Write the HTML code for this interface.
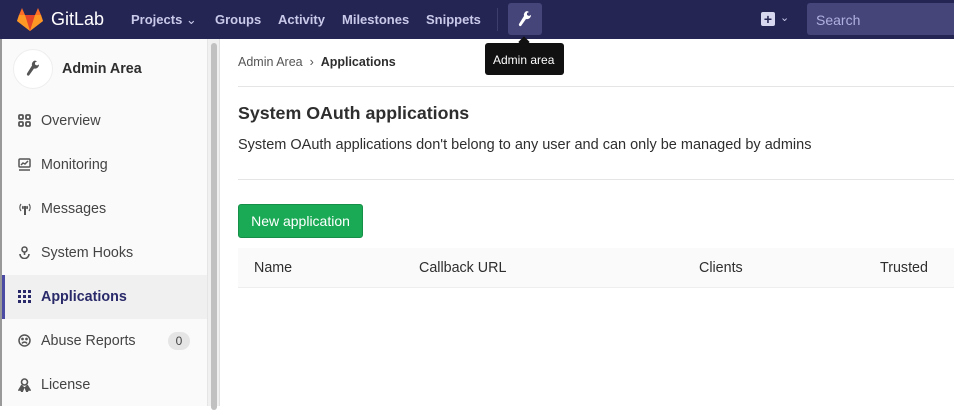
<!DOCTYPE html><html><head><style>
*{box-sizing:border-box;margin:0;padding:0}
body{width:954px;height:406px;overflow:hidden;font-family:"Liberation Sans",sans-serif;background:#fff;position:relative;color:#2e2e2e}
.hdr{position:absolute;left:0;top:0;width:954px;height:39px;background:#252554;color:#fff}
.hdr .n{position:absolute;top:12px;font-size:13px;font-weight:bold;color:#c9c9ea}
.side{position:absolute;left:0;top:39px;width:208px;height:367px;background:#fafafa;border-left:2px solid #999;border-right:1px solid #e5e5e5}
.sb{position:absolute;left:208px;top:39px;width:12px;height:367px;background:#f0f0f0;border-right:1px solid #e0e0e0}
.sb div{position:absolute;left:3px;top:4px;width:6px;height:367px;background:#c1c1c1;border-radius:3px}
.it{position:absolute;left:2px;width:205px;height:44px;font-size:14.3px;color:#444}
.it span{position:absolute;left:39px;top:14px}
.it svg{position:absolute;left:16px;top:15px}
.act{background:#f0f0f0;border-left:3px solid #4b4ba3}
.act span{font-weight:bold;color:#2a2a6a;left:36px}
.act svg{left:13px}
</style></head><body>
<div class="hdr">
<svg style="position:absolute;left:17px;top:8px" width="26" height="23" viewBox="0 0 26 23"><path d="M13 23L0 13l2-6 3-7 3 7h10l3-7 3 7 2 6z" fill="#fc6d26"/><path d="M13 23L8 7h10z" fill="#e24329"/><path d="M13 23L0 13 2 7h6z M13 23l13-10-2-6h-6z" fill="#fca326" opacity=".8"/></svg>
<div style="position:absolute;left:51px;top:9px;font-size:18px;color:#fff">GitLab</div>
<div class="n" style="left:131px">Projects <span style="font-weight:normal">⌄</span></div>
<div class="n" style="left:215px">Groups</div>
<div class="n" style="left:278px">Activity</div>
<div class="n" style="left:342px">Milestones</div>
<div class="n" style="left:426px">Snippets</div>
<div style="position:absolute;left:497px;top:8px;width:1px;height:23px;background:#3e3e6e"></div>
<div style="position:absolute;left:508px;top:3px;width:34px;height:32px;background:#45457a;border-radius:3px">
<svg style="position:absolute;left:10px;top:8px" width="14" height="16" viewBox="0 0 14 16"><path d="M9 0a4 4 0 0 0-3 5L1 13a1.5 1.5 0 0 0 2 2l5-7a4 4 0 0 0 5-4l-2 1-2-1V2l2-1z" fill="#fff"/></svg></div>
<div style="position:absolute;left:761px;top:12px;width:14px;height:14px;background:#d7d7f0;border-radius:2px;color:#252554;font-weight:bold;font-size:14px;line-height:14px;text-align:center">+</div>
<div style="position:absolute;left:780px;top:11px;font-size:11px;color:#c9c9ea">⌄</div>
<div style="position:absolute;left:807px;top:3px;width:150px;height:32px;background:#45457a;border-radius:3px;color:#b0b0e0;font-size:14px;padding:9px 0 0 9px">Search</div>
</div>
<div style="position:absolute;left:485px;top:43px;width:79px;height:32px;background:#111;border-radius:3px;color:#fff;font-size:12px;padding:10px 0 0 8px">Admin area</div>
<div style="position:absolute;left:520px;top:38px;width:8px;height:8px;background:#111;transform:rotate(45deg)"></div>
<div class="side">
<div style="position:absolute;left:11px;top:10px;width:40px;height:40px;border-radius:50%;background:#fff;border:1px solid #eee">
<svg style="position:absolute;left:12px;top:10px" width="14" height="17" viewBox="0 0 14 16"><path d="M9 0a4 4 0 0 0-3 5L1 13a1.5 1.5 0 0 0 2 2l5-7a4 4 0 0 0 5-4l-2 1-2-1V2l2-1z" fill="#555"/></svg></div>
<div style="position:absolute;left:60px;top:22px;font-size:14.3px;font-weight:bold;color:#2e2e2e">Admin Area</div>
</div>
<div class="it" style="top:99px"><svg width="13" height="13" viewBox="0 0 13 13" fill="none" stroke="#555" stroke-width="1.8"><rect x="1" y="1" width="4" height="4" rx="1"/><rect x="8" y="1" width="4" height="4" rx="1"/><rect x="1" y="8" width="4" height="4" rx="1"/><rect x="8" y="8" width="4" height="4" rx="1"/></svg><span>Overview</span></div>
<div class="it" style="top:143px"><svg width="13" height="13" viewBox="0 0 13 13" fill="none" stroke="#555" stroke-width="1.5"><rect x="1" y="1" width="11" height="8" rx="1"/><path d="M3 7l2-2 2 1 3-3M1 12h11"/></svg><span>Monitoring</span></div>
<div class="it" style="top:187px"><svg width="14" height="13" viewBox="0 0 14 13" fill="none" stroke="#555" stroke-width="1.2"><path d="M3 2a6 6 0 0 0 0 7M11 2a6 6 0 0 1 0 7M5 4a3 3 0 0 0 0 3M9 4a3 3 0 0 1 0 3"/><circle cx="7" cy="5.5" r="1" fill="#555"/><path d="M7 6v7" stroke-width="2"/></svg><span>Messages</span></div>
<div class="it" style="top:231px"><svg width="13" height="13" viewBox="0 0 13 13" fill="none" stroke="#555" stroke-width="1.6"><circle cx="6.5" cy="3.5" r="2.5"/><path d="M6.5 6v3M2 8a4.5 4.5 0 0 0 9 0"/></svg><span>System Hooks</span></div>
<div class="it act" style="top:275px"><svg width="13" height="13" viewBox="0 0 13 13" fill="#2a2a6a"><rect x="0" y="0" width="3" height="3"/><rect x="5" y="0" width="3" height="3"/><rect x="10" y="0" width="3" height="3"/><rect x="0" y="5" width="3" height="3"/><rect x="5" y="5" width="3" height="3"/><rect x="10" y="5" width="3" height="3"/><rect x="0" y="10" width="3" height="3"/><rect x="5" y="10" width="3" height="3"/><rect x="10" y="10" width="3" height="3"/></svg><span>Applications</span></div>
<div class="it" style="top:319px"><svg width="13" height="13" viewBox="0 0 13 13" fill="none" stroke="#555" stroke-width="1.5"><circle cx="6.5" cy="6.5" r="5.5"/><circle cx="4.5" cy="5" r=".6" fill="#555"/><circle cx="8.5" cy="5" r=".6" fill="#555"/><path d="M4 9.5a3 3 0 0 1 5 0"/></svg><span>Abuse Reports</span><b style="position:absolute;left:166px;top:13px;width:22px;height:18px;border-radius:9px;background:#e5e5e5;font-weight:normal;font-size:12px;text-align:center;line-height:18px">0</b></div>
<div class="it" style="top:363px"><svg width="13" height="14" viewBox="0 0 13 14" fill="none" stroke="#555" stroke-width="1.6"><circle cx="6.5" cy="4" r="3"/><path d="M4 7l-3 5 2 0 1 2 2-5M9 7l3 5-2 0-1 2-2-5" fill="#555"/></svg><span>License</span></div>
<div class="sb"><div></div></div>
<div style="position:absolute;left:238px;top:55px;font-size:12.5px;color:#555">Admin Area &nbsp;›&nbsp; <b style="color:#2e2e2e">Applications</b></div>
<div style="position:absolute;left:238px;top:86px;width:716px;height:1px;background:#e5e5e5"></div>
<div style="position:absolute;left:238px;top:103px;font-size:17.8px;font-weight:bold">System OAuth applications</div>
<div style="position:absolute;left:238px;top:137px;font-size:14.5px">System OAuth applications don't belong to any user and can only be managed by admins</div>
<div style="position:absolute;left:238px;top:179px;width:716px;height:1px;background:#e5e5e5"></div>
<div style="position:absolute;left:238px;top:204px;width:125px;height:34px;background:#1aaa55;border:1px solid #168f48;border-radius:3px;color:#fff;font-size:14px;text-align:center;line-height:32px">New application</div>
<div style="position:absolute;left:238px;top:248px;width:716px;height:40px;background:#fafafa;border-bottom:1px solid #eee;font-size:14.3px">
<span style="position:absolute;left:16px;top:12px">Name</span><span style="position:absolute;left:181px;top:12px">Callback URL</span><span style="position:absolute;left:461px;top:12px">Clients</span><span style="position:absolute;left:642px;top:12px">Trusted</span></div>
</body></html>
